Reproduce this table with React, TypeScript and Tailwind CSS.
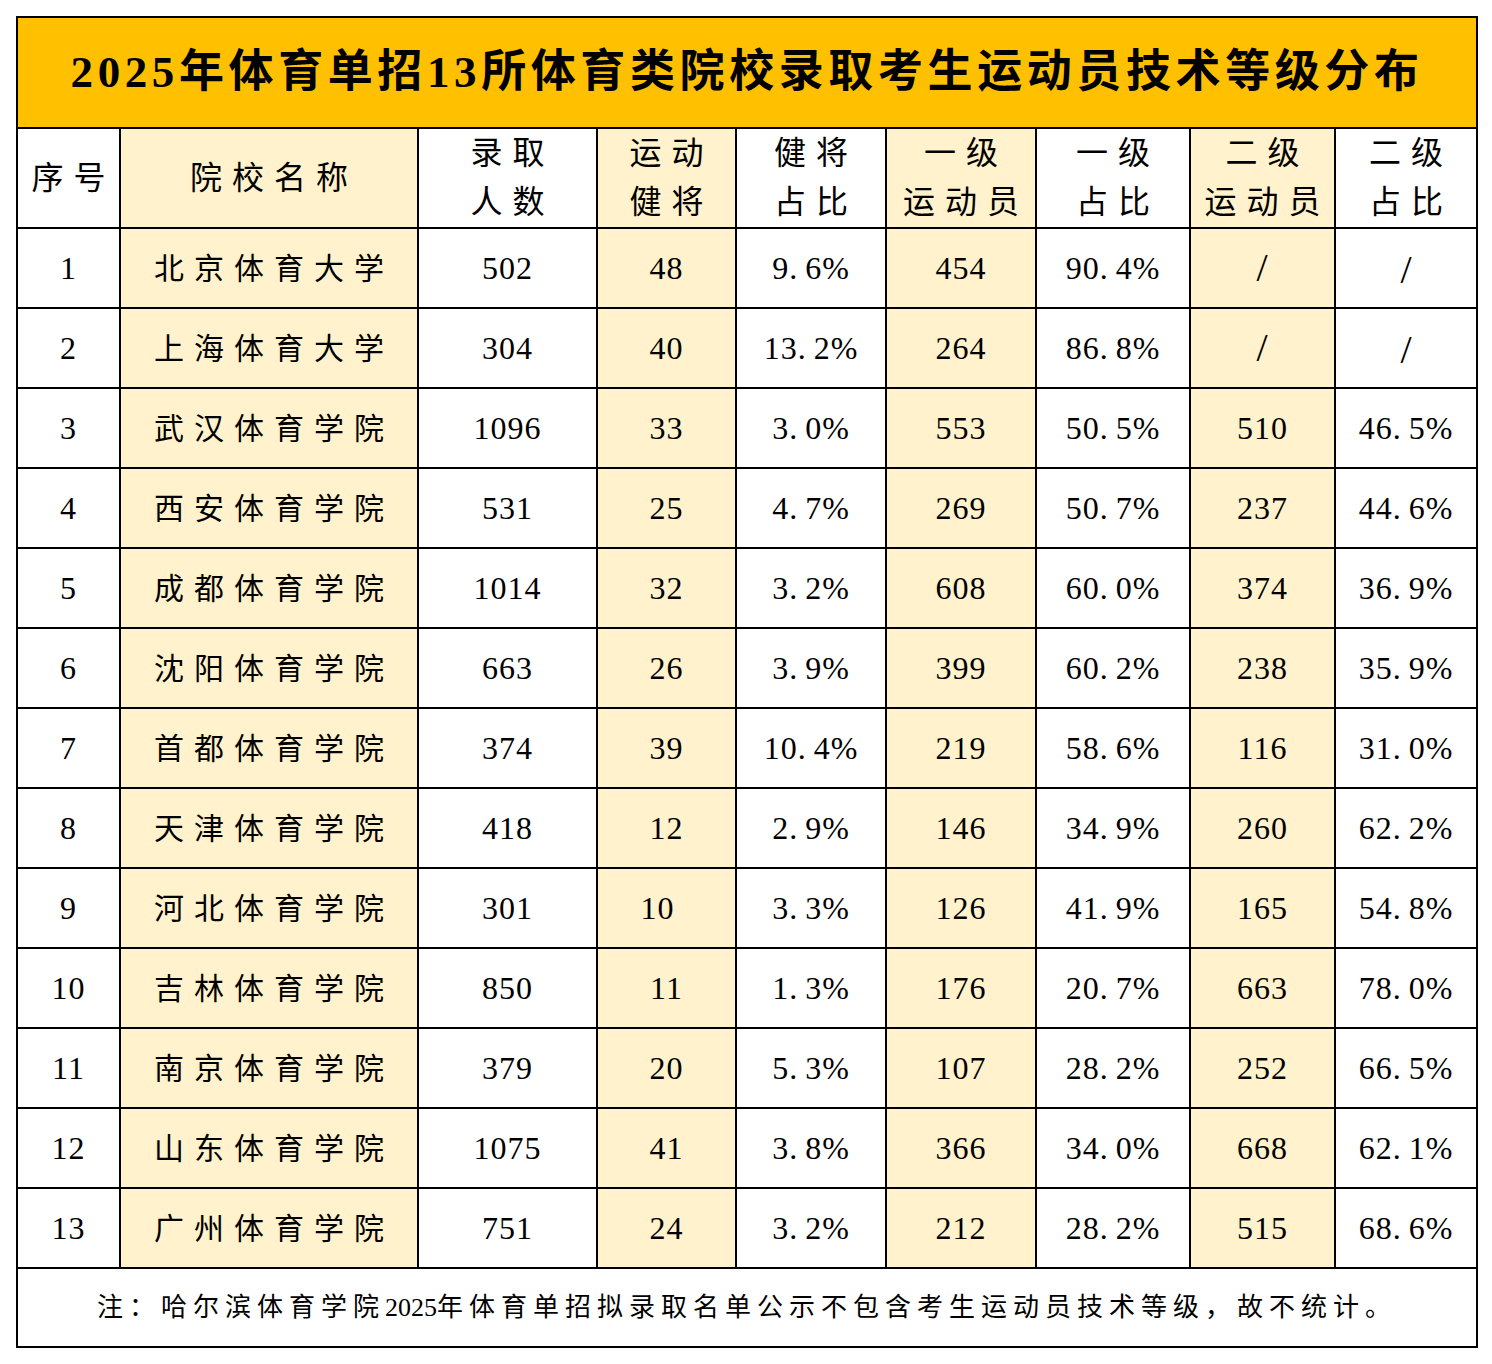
import React from "react";

const rows: [string, string, string, string, string, string, string, string, string][] = [
  ["1", "北京体育大学", "502", "48", "9.6%", "454", "90.4%", "/", "/"],
  ["2", "上海体育大学", "304", "40", "13.2%", "264", "86.8%", "/", "/"],
  ["3", "武汉体育学院", "1096", "33", "3.0%", "553", "50.5%", "510", "46.5%"],
  ["4", "西安体育学院", "531", "25", "4.7%", "269", "50.7%", "237", "44.6%"],
  ["5", "成都体育学院", "1014", "32", "3.2%", "608", "60.0%", "374", "36.9%"],
  ["6", "沈阳体育学院", "663", "26", "3.9%", "399", "60.2%", "238", "35.9%"],
  ["7", "首都体育学院", "374", "39", "10.4%", "219", "58.6%", "116", "31.0%"],
  ["8", "天津体育学院", "418", "12", "2.9%", "146", "34.9%", "260", "62.2%"],
  ["9", "河北体育学院", "301", "10", "3.3%", "126", "41.9%", "165", "54.8%"],
  ["10", "吉林体育学院", "850", "11", "1.3%", "176", "20.7%", "663", "78.0%"],
  ["11", "南京体育学院", "379", "20", "5.3%", "107", "28.2%", "252", "66.5%"],
  ["12", "山东体育学院", "1075", "41", "3.8%", "366", "34.0%", "668", "62.1%"],
  ["13", "广州体育学院", "751", "24", "3.2%", "212", "28.2%", "515", "68.6%"],
];

const font = {
  fontFamily: '"Liberation Serif", "Noto Sans CJK SC", serif',
};

const cell = "border-2 border-black text-center align-middle p-0";
const yellow = "bg-[#FFF2CC]";

function Head2({ a, b }: { a: string; b: string }) {
  return (
    <div className="flex flex-col items-center leading-[49px] text-[32px] tracking-[10px] pl-[10px]">
      <span>{a}</span>
      <span>{b}</span>
    </div>
  );
}

function Slash() {
  return <span className="text-[40px] leading-none relative top-[2px]">/</span>;
}

function Pct({ v }: { v: string }) {
  if (v === "/") {
    return <Slash />;
  }
  const [a, b] = v.split(".");
  return (
    <span className="text-[32px] tracking-[1px]">
      {a}.<span className="pl-[7px]">{b}</span>
    </span>
  );
}

export default function App() {
  return (
    <div className="bg-white w-[1492px] h-[1364px] p-4" style={font}>
      <table className="table-fixed border-collapse w-[1460px] text-black">
        <colgroup>
          <col className="w-[103px]" />
          <col className="w-[298px]" />
          <col className="w-[179px]" />
          <col className="w-[139px]" />
          <col className="w-[150px]" />
          <col className="w-[150px]" />
          <col className="w-[154px]" />
          <col className="w-[145px]" />
          <col className="w-[142px]" />
        </colgroup>
        <tbody>
          <tr className="h-[111px]">
            <td
              colSpan={9}
              className={`${cell} bg-[#FFC000] text-[45px] font-bold tracking-[4.6px]`}
            >
              2025年体育单招13所体育类院校录取考生运动员技术等级分布
            </td>
          </tr>
          <tr className="h-[99px]">
            <td className={`${cell} text-[32px] tracking-[10px] pl-[10px]`}>序号</td>
            <td className={`${cell} ${yellow} text-[32px] tracking-[10px] pl-[10px]`}>院校名称</td>
            <td className={cell}>
              <Head2 a="录取" b="人数" />
            </td>
            <td className={`${cell} ${yellow}`}>
              <Head2 a="运动" b="健将" />
            </td>
            <td className={cell}>
              <Head2 a="健将" b="占比" />
            </td>
            <td className={`${cell} ${yellow}`}>
              <Head2 a="一级" b="运动员" />
            </td>
            <td className={cell}>
              <Head2 a="一级" b="占比" />
            </td>
            <td className={`${cell} ${yellow}`}>
              <Head2 a="二级" b="运动员" />
            </td>
            <td className={cell}>
              <Head2 a="二级" b="占比" />
            </td>
          </tr>
          {rows.map((r) => (
            <tr key={r[0]} className="h-[80px]">
              <td className={`${cell} text-[32px] tracking-[1px]`}>{r[0]}</td>
              <td className={`${cell} ${yellow} text-[30px] tracking-[10px] pl-[10px]`}>{r[1]}</td>
              <td className={`${cell} text-[32px] tracking-[1px]`}>{r[2]}</td>
              <td className={`${cell} ${yellow} text-[32px] tracking-[1px]`}>
                <span className={r[3] === "10" ? "pr-[18px]" : ""}>{r[3]}</span>
              </td>
              <td className={cell}>
                <Pct v={r[4]} />
              </td>
              <td className={`${cell} ${yellow} text-[32px] tracking-[1px]`}>{r[5]}</td>
              <td className={cell}>
                <Pct v={r[6]} />
              </td>
              <td className={`${cell} ${yellow} text-[32px] tracking-[1px]`}>
                {r[7] === "/" ? <Slash /> : r[7]}
              </td>
              <td className={cell}>
                <Pct v={r[8]} />
              </td>
            </tr>
          ))}
          <tr className="h-[79px]">
            <td colSpan={9} className={`${cell} text-[26px] tracking-[6px]`}>
              注：哈尔滨体育学院<span className="tracking-normal text-[26px]">2025</span>年体育单招拟录取名单公示不包含考生运动员技术等级，故不统计。
            </td>
          </tr>
        </tbody>
      </table>
    </div>
  );
}
